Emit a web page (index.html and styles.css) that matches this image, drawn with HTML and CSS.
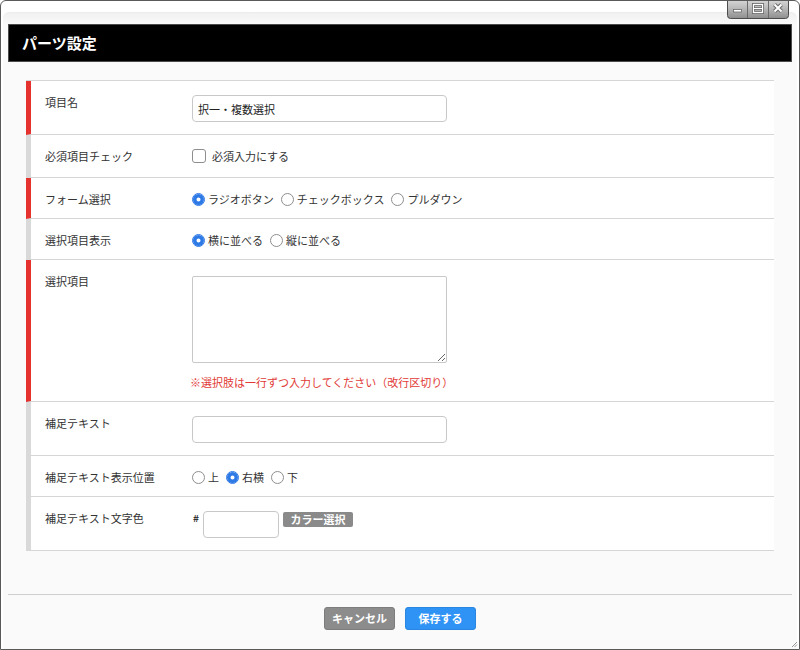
FILE: index.html
```html
<!DOCTYPE html>
<html lang="ja">
<head>
<meta charset="utf-8">
<title>パーツ設定</title>
<link rel="stylesheet" href="styles.css">
</head>
<body>
<div class="window">
  <div class="controls">
    <svg width="62" height="19" viewBox="0 0 62 19">
      <defs>
        <linearGradient id="cg" x1="0" y1="0" x2="0" y2="1">
          <stop offset="0" stop-color="#e4e4e4"/>
          <stop offset="0.5" stop-color="#bdbdbd"/>
          <stop offset="1" stop-color="#8e8e8e"/>
        </linearGradient>
      </defs>
      <rect x="0.5" y="-4" width="61" height="22.5" rx="3" fill="url(#cg)" stroke="#4c4c4c"/>
      <line x1="20.5" y1="0" x2="20.5" y2="18" stroke="#6a6a6a"/>
      <line x1="41.5" y1="0" x2="41.5" y2="18" stroke="#6a6a6a"/>
      <rect x="6.5" y="9.5" width="8" height="2.5" fill="#fff" stroke="#6a6a6a" stroke-width="0.8"/>
      <rect x="26.5" y="4.5" width="9" height="8" fill="none" stroke="#6a6a6a" stroke-width="3"/>
      <rect x="26.5" y="4.5" width="9" height="8" fill="none" stroke="#fff" stroke-width="1.3"/>
      <line x1="27" y1="8.5" x2="35" y2="8.5" stroke="#6a6a6a" stroke-width="2.6"/>
      <line x1="27" y1="8.5" x2="35" y2="8.5" stroke="#fff" stroke-width="1.2"/>
      <path d="M47.5 4.5 L54.5 11.5 M54.5 4.5 L47.5 11.5" stroke="#6a6a6a" stroke-width="4" fill="none"/>
      <path d="M47.5 4.5 L54.5 11.5 M54.5 4.5 L47.5 11.5" stroke="#fff" stroke-width="2" fill="none"/>
    </svg>
  </div>
  <div class="frame">
    <h1 class="titlebar">パーツ設定</h1>
    <div class="content">
      <div class="panel">
        <div class="row required">
          <div class="label">項目名</div>
          <div class="value"><input class="text" type="text" value="択一・複数選択"></div>
        </div>
        <div class="row">
          <div class="label">必須項目チェック</div>
          <div class="value">
            <label class="opt check-opt"><input class="check" type="checkbox"><span>必須入力にする</span></label>
          </div>
        </div>
        <div class="row required">
          <div class="label">フォーム選択</div>
          <div class="value options">
            <label class="opt"><input class="radio" type="radio" name="form" checked><span>ラジオボタン</span></label>
            <label class="opt"><input class="radio" type="radio" name="form"><span>チェックボックス</span></label>
            <label class="opt"><input class="radio" type="radio" name="form"><span>プルダウン</span></label>
          </div>
        </div>
        <div class="row">
          <div class="label">選択項目表示</div>
          <div class="value options">
            <label class="opt"><input class="radio" type="radio" name="disp" checked><span>横に並べる</span></label>
            <label class="opt"><input class="radio" type="radio" name="disp"><span>縦に並べる</span></label>
          </div>
        </div>
        <div class="row required">
          <div class="label">選択項目</div>
          <div class="value stack">
            <textarea class="area"></textarea>
            <p class="note">※選択肢は一行ずつ入力してください（改行区切り）</p>
          </div>
        </div>
        <div class="row">
          <div class="label">補足テキスト</div>
          <div class="value"><input class="text" type="text"></div>
        </div>
        <div class="row">
          <div class="label">補足テキスト表示位置</div>
          <div class="value options">
            <label class="opt"><input class="radio" type="radio" name="pos"><span>上</span></label>
            <label class="opt"><input class="radio" type="radio" name="pos" checked><span>右横</span></label>
            <label class="opt"><input class="radio" type="radio" name="pos"><span>下</span></label>
          </div>
        </div>
        <div class="row">
          <div class="label">補足テキスト文字色</div>
          <div class="value color-row">
            <span class="hash">#</span>
            <input class="text color" type="text">
            <button class="pick" type="button">カラー選択</button>
          </div>
        </div>
      </div>
    </div>
    <div class="footer">
      <button class="btn cancel" type="button">キャンセル</button>
      <button class="btn save" type="button">保存する</button>
    </div>
  </div>
  <svg class="grip" width="7" height="7" viewBox="0 0 7 7">
    <path d="M6 1 L1 6 M6 3.5 L3.5 6" stroke="#999" stroke-width="1" fill="none"/>
  </svg>
</div>
</body>
</html>
```

FILE: styles.css
```css
* { box-sizing: border-box; }

html, body {
  margin: 0;
  padding: 0;
  background: #fff;
}

body {
  font-family: "Noto Sans CJK JP", "Noto Sans", sans-serif;
  font-size: 11px;
  color: #333;
}

.window {
  position: relative;
  width: 800px;
  height: 650px;
  border: 1px solid #5a5a5a;
  border-radius: 6px 6px 0 0;
  background: #fff;
  display: flex;
  flex-direction: column;
  overflow: hidden;
}

.controls {
  position: absolute;
  top: -1px;
  left: 726px;
  line-height: 0;
}

.grip {
  position: absolute;
  right: 1px;
  bottom: 1px;
}

.frame {
  flex: 1;
  margin: 11px 2px 0 2px;
  padding: 12px 5px 0 5px;
  border-radius: 6px 6px 0 0;
  border-top: 1px solid #ececec;
  background: linear-gradient(#f1f1f1, #fafafa 12px);
  display: flex;
  flex-direction: column;
}

.titlebar {
  margin: 0;
  height: 38px;
  margin-top: -1px;
  background: #000;
  border: 1px solid #4a4a4a;
  color: #fff;
  font-size: 15px;
  font-weight: 700;
  line-height: 36px;
  padding-left: 13px;
}

.content {
  flex: 1;
  padding: 18px 18px 0 18px;
}

.panel {
  background: #fff;
  border-top: 1px solid #d6d6d6;
}

.row {
  display: grid;
  grid-template-columns: 147px 1fr;
  padding: 14px 0 12px 14px;
  border-left: 5px solid #d9d9d9;
  border-bottom: 1px solid #d6d6d6;
}

.row.required {
  border-left-color: #e5322f;
}

.label {
  line-height: 14px;
  color: #333;
}

.value {
  display: flex;
  align-items: center;
  min-height: 14px;
  line-height: 14px;
}

.options {
  gap: 7px;
}

.opt {
  display: inline-flex;
  align-items: center;
  gap: 3px;
  color: #333;
}

.check-opt {
  gap: 6px;
  height: 16px;
  align-items: flex-start;
}

.radio {
  appearance: none;
  -webkit-appearance: none;
  width: 13px;
  height: 13px;
  margin: 0;
  border: 1px solid #8e8e8e;
  border-radius: 50%;
  background: #fff;
}

.radio:checked {
  border-color: #2d79e6;
  background: #fff;
  box-shadow: inset 0 0 0 3.5px #2d79e6;
}

.check {
  appearance: none;
  -webkit-appearance: none;
  width: 14px;
  height: 14px;
  margin: 0;
  border: 1px solid #8e8e8e;
  border-radius: 3px;
  background: #fff;
}

.text {
  width: 255px;
  height: 27px;
  margin: 0;
  padding: 0 5px;
  border: 1px solid #c8c8c8;
  border-radius: 4px;
  background: #fff;
  font-family: inherit;
  font-size: 11px;
  color: #222;
  outline: none;
}

.stack {
  flex-direction: column;
  align-items: flex-start;
}

.area {
  display: block;
  width: 255px;
  height: 87px;
  margin: 2px 0 0 0;
  border: 1px solid #c8c8c8;
  border-radius: 2px;
  background: #fff;
  font-family: inherit;
  resize: both;
}

.note {
  margin: 12px 0 0 -2px;
  color: #e23a36;
  line-height: 14px;
}

.color-row {
  align-items: flex-start;
}

.hash {
  font-size: 10px;
  font-weight: 700;
  line-height: 12px;
  margin: 1px 4px 0 1px;
  color: #333;
}

.text.color {
  width: 76px;
  height: 27px;
}

.pick {
  margin: 1px 0 0 4px;
  width: 70px;
  height: 15px;
  padding: 0;
  border: 0;
  border-radius: 2px;
  background: #8a8a8a;
  color: #fff;
  font-family: inherit;
  font-size: 11px;
  font-weight: 700;
  line-height: 15px;
}

.footer {
  height: 55px;
  border-top: 1px solid #cfcfcf;
  display: flex;
  justify-content: center;
  align-items: flex-start;
  gap: 10px;
  padding-top: 12px;
}

.btn {
  width: 71px;
  height: 23px;
  padding: 0;
  border-radius: 3px;
  color: #fff;
  font-family: inherit;
  font-size: 11px;
  font-weight: 700;
  line-height: 21px;
}

.btn.cancel {
  background: #8c8c8c;
  border: 1px solid #7d7d7d;
}

.btn.save {
  background: #2e93f5;
  border: 1px solid #2a86e0;
}
```
